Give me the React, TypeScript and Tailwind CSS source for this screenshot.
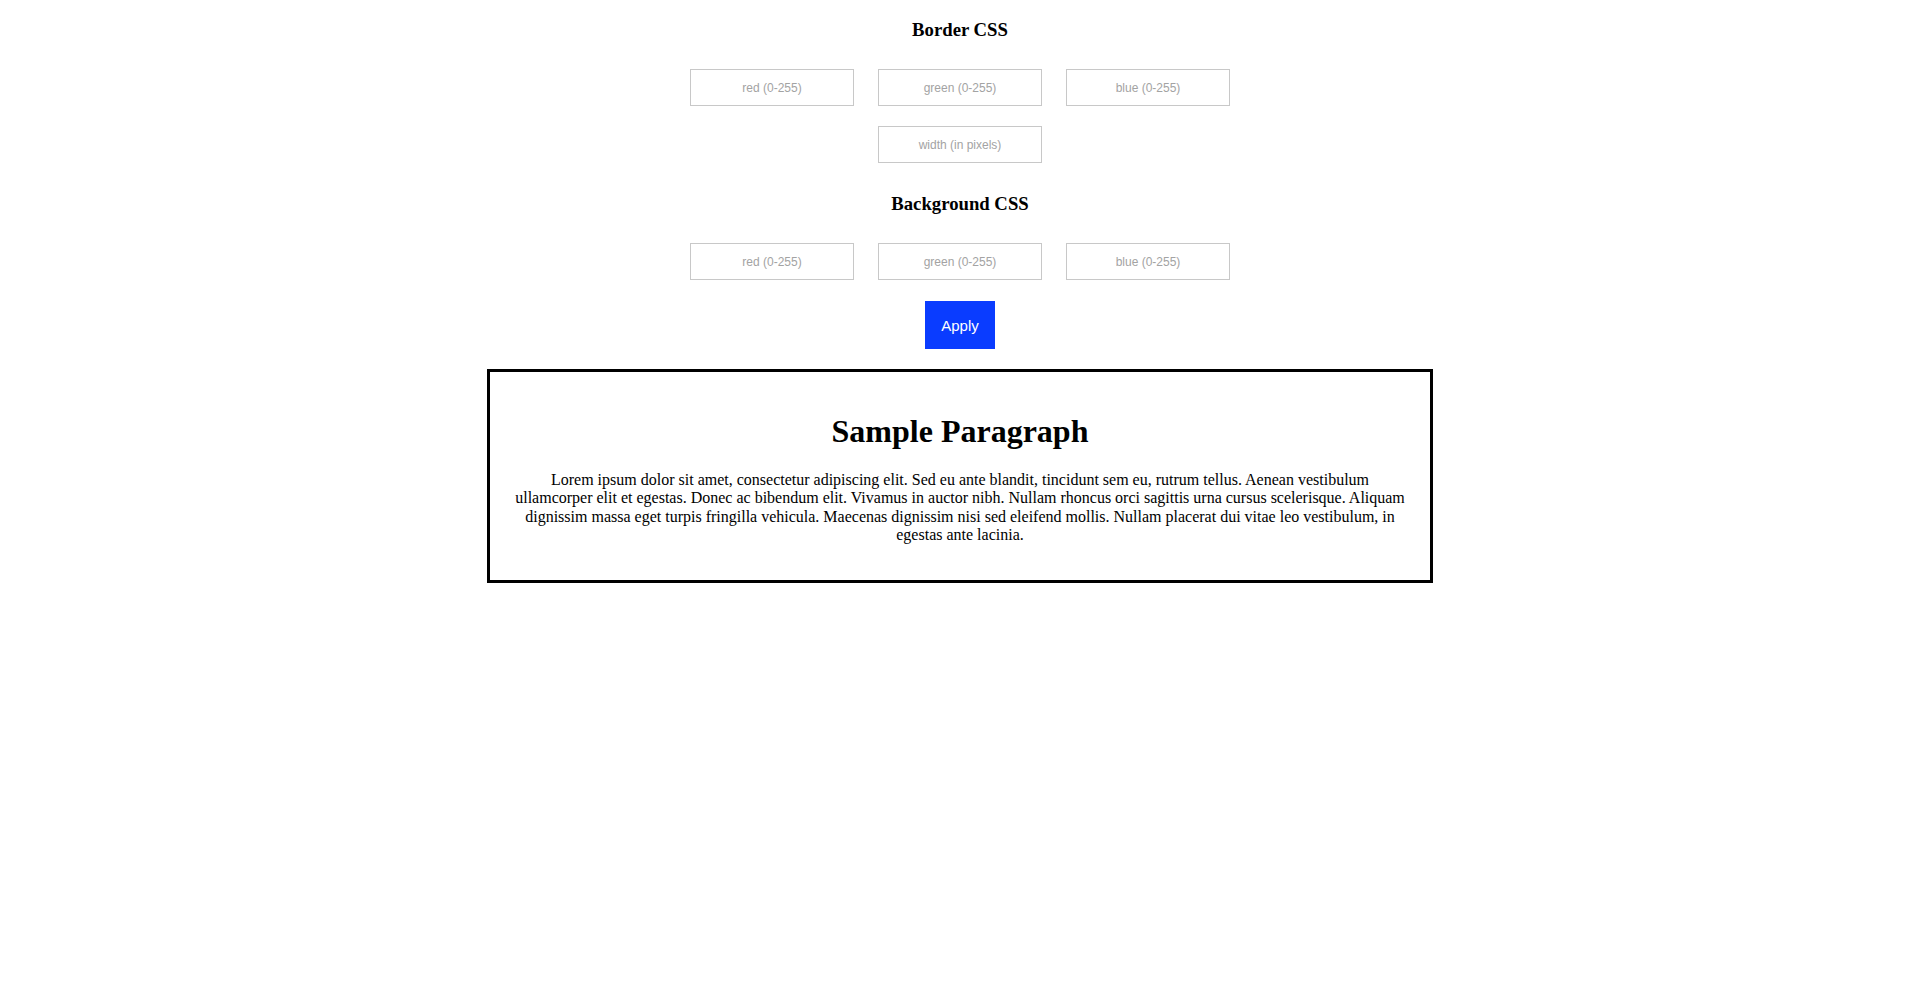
import React, { useState } from 'react';

type Rgb = { r: string; g: string; b: string };

const inputClass =
  "w-[164px] h-[37px] border border-[#c8c8c8] bg-white text-center text-[12px] text-black placeholder:text-[#a3a3a3] font-['Liberation_Sans',Arial,sans-serif] outline-none";

const ColorInputs: React.FC<{ value: Rgb; onChange: (v: Rgb) => void }> = ({ value, onChange }) => (
  <div className="flex justify-center gap-[24px]">
    <input
      className={inputClass}
      placeholder="red (0-255)"
      value={value.r}
      onChange={(e) => onChange({ ...value, r: e.target.value })}
    />
    <input
      className={inputClass}
      placeholder="green (0-255)"
      value={value.g}
      onChange={(e) => onChange({ ...value, g: e.target.value })}
    />
    <input
      className={inputClass}
      placeholder="blue (0-255)"
      value={value.b}
      onChange={(e) => onChange({ ...value, b: e.target.value })}
    />
  </div>
);

const App: React.FC = () => {
  const [border, setBorder] = useState<Rgb>({ r: '', g: '', b: '' });
  const [borderWidth, setBorderWidth] = useState('');
  const [bg, setBg] = useState<Rgb>({ r: '', g: '', b: '' });
  const [applied, setApplied] = useState<{ border: Rgb; width: string; bg: Rgb } | null>(null);

  // Only used after the user presses Apply
  const boxStyle: React.CSSProperties = {};
  if (applied) {
    const { border: bc, width, bg: bgc } = applied;
    if (bc.r || bc.g || bc.b) boxStyle.borderColor = `rgb(${bc.r || 0}, ${bc.g || 0}, ${bc.b || 0})`;
    if (width) boxStyle.borderWidth = `${width}px`;
    if (bgc.r || bgc.g || bgc.b) boxStyle.backgroundColor = `rgb(${bgc.r || 0}, ${bgc.g || 0}, ${bgc.b || 0})`;
  }

  return (
    <div className="min-h-screen bg-white text-black font-['Liberation_Serif','Times_New_Roman',serif] flex flex-col items-center pt-[19px]">
      {/* Border section */}
      <h3 className="text-[18.72px] leading-[22px] font-bold">Border CSS</h3>
      <div className="mt-[28px]">
        <ColorInputs value={border} onChange={setBorder} />
      </div>
      <input
        className={`${inputClass} mt-[20px]`}
        placeholder="width (in pixels)"
        value={borderWidth}
        onChange={(e) => setBorderWidth(e.target.value)}
      />

      {/* Background section */}
      <h3 className="mt-[30px] text-[18.72px] leading-[22px] font-bold">Background CSS</h3>
      <div className="mt-[28px]">
        <ColorInputs value={bg} onChange={setBg} />
      </div>

      <button
        className="mt-[21px] w-[70px] h-[48px] bg-[#0a3cff] text-white text-[15px] pt-[2px] font-['Liberation_Sans',Arial,sans-serif]"
        onClick={() => setApplied({ border, width: borderWidth, bg })}
      >
        Apply
      </button>

      {/* Sample box */}
      <div className="mt-[20px] w-[946px] border-[3px] border-black px-[20px] pt-[20px] pb-[19px] text-center" style={boxStyle}>
        <h1 className="mt-[21px] mb-[21px] text-[32px] leading-[37px] font-bold">Sample Paragraph</h1>
        <p className="mx-auto mb-[16px] w-[893px] text-[16px] leading-[18.4px]">
          Lorem ipsum dolor sit amet, consectetur adipiscing elit. Sed eu ante blandit, tincidunt sem eu, rutrum tellus. Aenean vestibulum ullamcorper elit et egestas. Donec ac bibendum elit. Vivamus in auctor nibh. Nullam rhoncus orci sagittis urna cursus scelerisque. Aliquam dignissim massa eget turpis fringilla vehicula. Maecenas dignissim nisi sed eleifend mollis. Nullam placerat dui vitae leo vestibulum, in egestas ante lacinia.
        </p>
      </div>
    </div>
  );
};

export default App;
